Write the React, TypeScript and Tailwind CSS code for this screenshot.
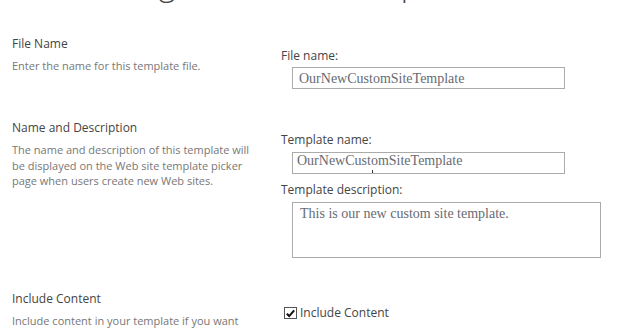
import React from "react";

const serif = "font-['Liberation_Serif','Times_New_Roman',serif] text-[14px] leading-[15px] text-[#676b73]";

function Section({ title, children, right, className = "" }: { title: string; children: React.ReactNode; right: React.ReactNode; className?: string }) {
  return (
    <div className={`grid grid-cols-[281px_1fr] ${className}`}>
      <div className="pl-[12px]">
        <h3 className="text-[12px] leading-[16px] text-[#444]">{title}</h3>
        <p className="mt-[6px] text-[11px] leading-[15.5px] text-[#777]">{children}</p>
      </div>
      <div>{right}</div>
    </div>
  );
}

export default function App() {
  return (
    <div className="w-[630px] h-[331px] overflow-hidden bg-white font-['Open_Sans','Noto_Sans',sans-serif]">
      {/* page title, mostly scrolled off the top */}
      <div className="-mt-[32px] h-[32px] pl-[15px] text-[32px] leading-[32px] font-light text-[#444] whitespace-nowrap">
        Site Settings ▸ Save as Template
      </div>

      <Section
        className="mt-[36px]"
        title="File Name"
        right={
          <div className="pt-[12px]">
            <div className="text-[12px] leading-[16px] text-[#444]">File name:</div>
            <div className={`mt-[3px] ml-[11px] w-[273px] h-[22px] border border-[#ababab] pl-[6px] pt-[3px] ${serif}`}>
              OurNewCustomSiteTemplate
            </div>
          </div>
        }
      >
        Enter the name for this template file.
      </Section>

      <Section
        className="mt-[31px]"
        title="Name and Description"
        right={
          <div className="pt-[12px]">
            <div className="text-[12px] leading-[16px] text-[#444]">Template name:</div>
            <div className={`relative mt-[4px] ml-[11px] w-[273px] h-[22px] border border-[#ababab] pl-[4px] ${serif}`}>
              OurNewCustomSiteTemplate
              <span className="absolute left-[79px] top-[17px] w-px h-[3px] bg-[#333]" />
            </div>
            <div className="mt-[8px] text-[12px] leading-[16px] text-[#444]">Template description:</div>
            <div className={`mt-[4px] ml-[11px] w-[309px] h-[56px] border border-[#ababab] pl-[7px] pt-[3px] ${serif}`}>
              This is our new custom site template.
            </div>
          </div>
        }
      >
        The name and description of this template will
        <br />
        be displayed on the Web site template picker
        <br />
        page when users create new Web sites.
      </Section>

      <Section
        className="mt-[33px]"
        title="Include Content"
        right={
          <label className="pt-[14px] ml-[3px] flex items-center gap-[3px] text-[12px] leading-[16px] text-[#444]">
            <span className="w-[13px] h-[12px] border border-[#555] bg-white flex items-center justify-center">
              <svg viewBox="0 0 12 12" className="w-[11px] h-[11px]">
                <path d="M2 6.2 L4.6 8.8 L10 2.6" fill="none" stroke="#111" strokeWidth="2.2" />
              </svg>
            </span>
            Include Content
          </label>
        }
      >
        Include content in your template if you want
      </Section>
    </div>
  );
}
